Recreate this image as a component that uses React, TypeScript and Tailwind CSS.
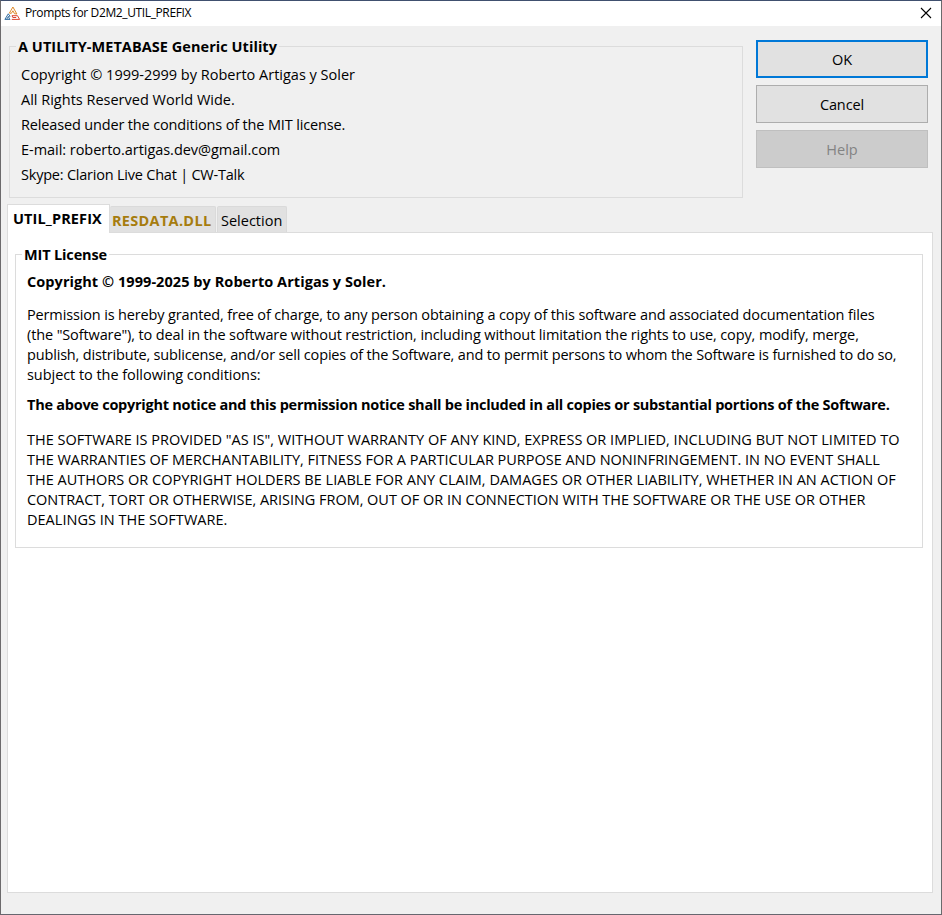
import React from "react";

function AppIcon() {
  return (
    <svg width="17" height="15" viewBox="0 0 17 15" fill="none" className="-mr-px shrink-0">
      <path d="M5.4 7.1 8.9 1l4 7-2.4-.3-1.6-2.9-1.6 2.6z" stroke="#df8a2a" strokeWidth="1" />
      <path d="M.9 13.4 4.3 7.8l1.8 2.6-1.5 1.2 1.4 1.8zM2.7 13.2l2-3.2" stroke="#1f5f96" strokeWidth="0.9" />
      <path d="M7.8 13.4h7.8l-2.1-3.7H8l.8 1.8h3.4" stroke="#dc4630" strokeWidth="1" />
    </svg>
  );
}

function TitleBar() {
  return (
    <header className="flex h-[25px] items-center bg-white pl-[3px] pr-[9px]">
      <AppIcon />
      <span className="mb-[2px] ml-[5px] text-[12px] leading-[16px] tracking-[-0.38px]">Prompts for D2M2_UTIL_PREFIX</span>
      <svg width="12" height="12" viewBox="0 0 12 12" className="mb-px ml-auto">
        <path d="M1 1l10 10M11 1L1 11" stroke="#000" strokeWidth="1.1" />
      </svg>
    </header>
  );
}

export default function App() {
  return (
    <div className="flex h-[915px] w-[942px] flex-col border border-t-[#40506f] border-r-[#6a6a6c] border-b-[#67676f] border-l-[#6c6a6c] bg-[#f0f0f0] font-['Open_Sans','Liberation_Sans',sans-serif] text-[14.5px] leading-[20px] whitespace-nowrap text-black">
      <TitleBar />

      <div className="flex h-[178px] pt-[14px] pl-2">
        <section className="mt-[6px] h-[152px] w-[734px] border border-[#dcdcdc]">
          <h1 className="-mt-[10px] ml-[6px] w-fit bg-[#f0f0f0] px-[2px] font-bold tracking-[0.05px]">
            A UTILITY-METABASE Generic Utility
          </h1>
          <div className="mt-[5px] ml-[11px] leading-[25px]">
            <p>Copyright © 1999-2999 by Roberto Artigas y Soler</p>
            <p>All Rights Reserved World Wide.</p>
            <p className="tracking-[-0.155px]">Released under the conditions of the MIT license.</p>
            <p className="tracking-[-0.04px]">E-mail: roberto.artigas.dev@gmail.com</p>
            <p className="tracking-[-0.22px]">Skype: Clarion Live Chat | CW-Talk</p>
          </div>
        </section>

        <div className="ml-[13px] flex w-[172px] flex-col gap-[7px]">
          <button className="h-[38px] border-2 border-[#0078d7] bg-[#e1e1e1] pt-[2px]">OK</button>
          <button className="h-[38px] border border-[#adadad] bg-[#e1e1e1] pt-[2px] tracking-[-0.1px]">Cancel</button>
          <button className="h-[38px] border border-[#bfbfbf] bg-[#cccccc] pt-[2px] text-[#838383]">Help</button>
        </div>
      </div>

      <main className="ml-[6px] flex w-[926px] flex-col">
        <nav className="z-10 flex h-[29px] items-end">
          <button className="flex h-[29px] w-[103px] justify-start border border-b-0 border-[#dcdcdc] bg-white pt-[4px] pl-[5px] font-bold tracking-[0.12px]">
            UTIL_PREFIX
          </button>
          <button className="mb-px h-[26px] w-[106px] rounded-t-[2px] border border-b-0 border-l-0 border-[#dadada] bg-[#e1e1e1] pt-[3px] text-left font-bold tracking-[0.3px] text-[#a67c0e]">
            <span className="ml-[2px]">RESDATA.DLL</span>
          </button>
          <button className="mb-px ml-px h-[26px] w-[70px] rounded-t-[2px] border border-b-0 border-[#dadada] bg-[#e1e1e1] pt-[3px] text-left">
            <span className="ml-[3px]">Selection</span>
          </button>
        </nav>

        <div className="-mt-px h-[661px] border border-[#dcdcdc] bg-white pt-[21px] pl-[7px]">
          <section className="h-[294px] w-[908px] border border-[#dcdcdc]">
            <h2 className="-mt-[10px] ml-[6px] w-fit bg-white px-[2px] font-bold tracking-[-0.15px]">MIT License</h2>
            <div className="ml-[11px]">
              <p className="mt-[7px] font-bold tracking-[0.06px]">Copyright © 1999-2025 by Roberto Artigas y Soler.</p>
              <div className="mt-[13px]">
                <p className="tracking-[-0.144px]">Permission is hereby granted, free of charge, to any person obtaining a copy of this software and associated documentation files</p>
                <p className="tracking-[-0.122px]">(the "Software"), to deal in the software without restriction, including without limitation the rights to use, copy, modify, merge,</p>
                <p className="tracking-[-0.166px]">publish, distribute, sublicense, and/or sell copies of the Software, and to permit persons to whom the Software is furnished to do so,</p>
                <p className="tracking-[-0.05px]">subject to the following conditions:</p>
              </div>
              <p className="mt-[10px] font-bold tracking-[-0.256px]">The above copyright notice and this permission notice shall be included in all copies or substantial portions of the Software.</p>
              <div className="mt-[15px]">
                <p>THE SOFTWARE IS PROVIDED "AS IS", WITHOUT WARRANTY OF ANY KIND, EXPRESS OR IMPLIED, INCLUDING BUT NOT LIMITED TO</p>
                <p className="tracking-[-0.02px]">THE WARRANTIES OF MERCHANTABILITY, FITNESS FOR A PARTICULAR PURPOSE AND NONINFRINGEMENT. IN NO EVENT SHALL</p>
                <p className="tracking-[0.015px]">THE AUTHORS OR COPYRIGHT HOLDERS BE LIABLE FOR ANY CLAIM, DAMAGES OR OTHER LIABILITY, WHETHER IN AN ACTION OF</p>
                <p className="tracking-[-0.035px]">CONTRACT, TORT OR OTHERWISE, ARISING FROM, OUT OF OR IN CONNECTION WITH THE SOFTWARE OR THE USE OR OTHER</p>
                <p className="tracking-[0.02px]">DEALINGS IN THE SOFTWARE.</p>
              </div>
            </div>
          </section>
        </div>
      </main>
    </div>
  );
}
